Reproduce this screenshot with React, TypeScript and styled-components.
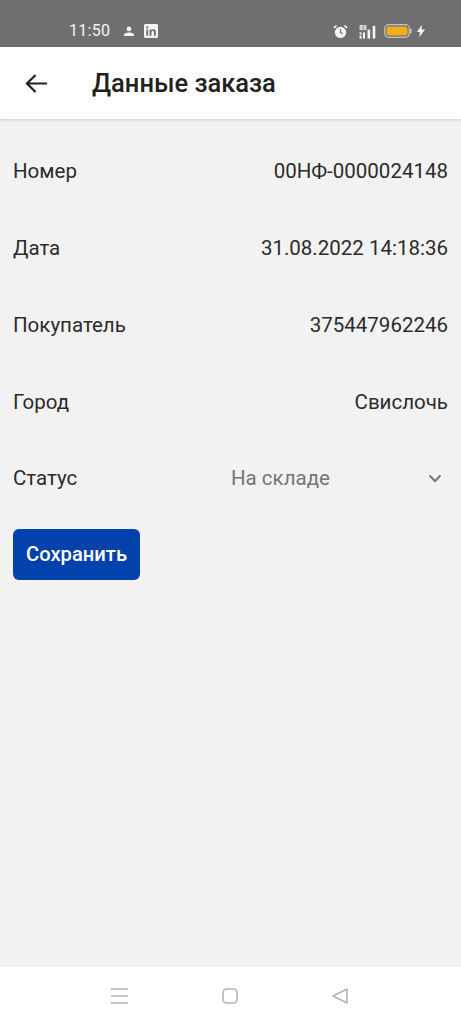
import React from "react";
import styled, { createGlobalStyle } from "styled-components";

const Global = createGlobalStyle`
  html, body { margin: 0; padding: 0; height: 100%; }
  body { font-family: Roboto, "Noto Sans", sans-serif; background: #f2f2f2; }
  #root { height: 100%; }
`;

const Page = styled.div`
  width: 461px;
  height: 1024px;
  display: flex;
  flex-direction: column;
  overflow: hidden;
  background: #f2f2f2;
`;

const StatusBar = styled.div`
  height: 47px;
  box-sizing: border-box;
  background: #6f6f6f;
  display: flex;
  align-items: flex-end;
  justify-content: space-between;
  padding: 0 36px 7px 69px;
  color: #f4f4f4;
`;

const StatusGroup = styled.div`
  display: flex;
  align-items: center;
  height: 18px;
`;

const Time = styled.span`
  font-size: 16px;
  line-height: 18px;
  letter-spacing: 0.3px;
  margin-right: 13px;
`;

const StatusIcon = styled.svg<{ $left?: number }>`
  display: block;
  margin-left: ${(p) => p.$left ?? 0}px;
`;

const AppBar = styled.header`
  height: 72px;
  background: #fff;
  display: flex;
  align-items: center;
  padding: 0 0 0 25px;
  box-shadow: 0 1px 3px rgba(0, 0, 0, 0.16);
  position: relative;
`;

const Title = styled.h1`
  margin: 0 0 0 44px;
  font-size: 25.5px;
  line-height: 30px;
  font-weight: 500;
  color: #212121;
`;

const Content = styled.main`
  flex: 1;
  padding: 14px 13px 0;
  display: flex;
  flex-direction: column;
`;

const Row = styled.div`
  height: 76.75px;
  display: flex;
  align-items: center;
  justify-content: space-between;
  font-size: 20.5px;
  line-height: 24px;
  color: #2b2b2b;
`;

const Label = styled.span``;
const Value = styled.span``;

const SelectValue = styled.div`
  width: 217px;
  display: flex;
  align-items: center;
  justify-content: space-between;
  color: #757575;
  padding-right: 6px;
  box-sizing: border-box;
`;

const SaveButton = styled.button`
  margin-top: 12px;
  width: 127px;
  height: 51px;
  border: none;
  border-radius: 6px;
  background: #0342ac;
  color: #fff;
  font-family: inherit;
  font-size: 20.2px;
  font-weight: 500;
  padding: 0;
`;

const NavBar = styled.nav`
  height: 57px;
  background: #fff;
  display: flex;
  align-items: center;
  justify-content: center;
  gap: 94px;
  padding-right: 3px;
  color: #b4b4b4;
`;

const rows = [
  ["Номер", "00НФ-0000024148"],
  ["Дата", "31.08.2022 14:18:36"],
  ["Покупатель", "375447962246"],
  ["Город", "Свислочь"],
];

export default function App() {
  return (
    <Page>
      <Global />
      <StatusBar>
        <StatusGroup>
          <Time>11:50</Time>
          <StatusIcon width="12" height="11" viewBox="0 0 13 12" fill="#f4f4f4">
            <circle cx="6.5" cy="3.2" r="2.6" />
            <path d="M1 11V9.6C1 8 4 7 6.5 7S12 8 12 9.6V11Z" />
          </StatusIcon>
          <StatusIcon $left={9} width="14" height="14" viewBox="0 0 15 15">
            <rect width="15" height="15" rx="1.5" fill="#f4f4f4" />
            <rect x="2.5" y="5.8" width="2" height="6.7" fill="#6f6f6f" />
            <rect x="2.5" y="2.6" width="2" height="2" fill="#6f6f6f" />
            <path d="M6 5.8h2v1c.5-.8 1.3-1.2 2.3-1.2 1.8 0 2.4 1.1 2.4 3v3.9h-2V9c0-1-.3-1.6-1.2-1.6S8 8 8 9v3.5H6Z" fill="#6f6f6f" />
          </StatusIcon>
        </StatusGroup>
        <StatusGroup>
          <StatusIcon width="15" height="15" viewBox="0 0 16 16">
            <circle cx="8" cy="9" r="6" fill="#f4f4f4" />
            <path d="M8 5.5V9l2.4 1.4" stroke="#6f6f6f" strokeWidth="1.3" fill="none" />
            <path d="M1 4.2 3.8 1.6M15 4.2 12.2 1.6" stroke="#f4f4f4" strokeWidth="1.8" />
          </StatusIcon>
          <StatusIcon $left={10} width="20" height="15" viewBox="0 0 20 16" fill="#f4f4f4">
            <rect x="1" y="9" width="2.2" height="2.2" />
            <rect x="1" y="12.5" width="2.2" height="3" />
            <rect x="4.6" y="9" width="2.2" height="6.5" />
            <rect x="9.5" y="6" width="2.8" height="9.5" />
            <rect x="15" y="2" width="2.8" height="13.5" />
            <rect x="1" y="1" width="3.4" height="5.5" opacity="0.75" />
            <rect x="5" y="1" width="3.4" height="5.5" opacity="0.75" />
          </StatusIcon>
          <StatusIcon $left={6} width="28" height="14" viewBox="0 0 28 14">
            <rect x="0.7" y="0.7" width="24.6" height="12.6" rx="4" fill="none" stroke="#c4c4c4" strokeWidth="1.2" />
            <rect x="2.5" y="2.5" width="21" height="9" rx="2.5" fill="#f0ae1c" />
            <rect x="26" y="4.5" width="1.6" height="5" rx="0.8" fill="#c4c4c4" />
          </StatusIcon>
          <StatusIcon $left={5} width="8" height="14" viewBox="0 0 9 14" fill="#f4f4f4">
            <path d="M5.5 0 0 8h3.2L2.6 14 9 5.4H5.2Z" />
          </StatusIcon>
        </StatusGroup>
      </StatusBar>
      <AppBar>
        <svg width="23" height="21" viewBox="0 0 24 22" fill="none" stroke="#212121" strokeWidth="2.3">
          <path d="M23 11H2M11 2l-9 9 9 9" />
        </svg>
        <Title>Данные заказа</Title>
      </AppBar>
      <Content>
        {rows.map(([l, v]) => (
          <Row key={l}>
            <Label>{l}</Label>
            <Value>{v}</Value>
          </Row>
        ))}
        <Row>
          <Label>Статус</Label>
          <SelectValue>
            <span>На складе</span>
            <svg width="14" height="9" viewBox="0 0 14 9" fill="none" stroke="#757575" strokeWidth="2">
              <path d="M1.5 1.5 7 7l5.5-5.5" />
            </svg>
          </SelectValue>
        </Row>
        <SaveButton>Сохранить</SaveButton>
      </Content>
      <NavBar>
        <svg width="17" height="16" viewBox="0 0 17 16" stroke="currentColor" strokeWidth="1.6">
          <path d="M0 1h17M0 8h17M0 15h17" />
        </svg>
        <svg width="16" height="16" viewBox="0 0 16 16" fill="none" stroke="currentColor" strokeWidth="1.6">
          <rect x="1" y="1" width="14" height="14" rx="3.5" />
        </svg>
        <svg width="16" height="16" viewBox="0 0 16 16" fill="none" stroke="currentColor" strokeWidth="1.5">
          <path d="M15 1v14L1 8Z" strokeLinejoin="round" />
        </svg>
      </NavBar>
    </Page>
  );
}
